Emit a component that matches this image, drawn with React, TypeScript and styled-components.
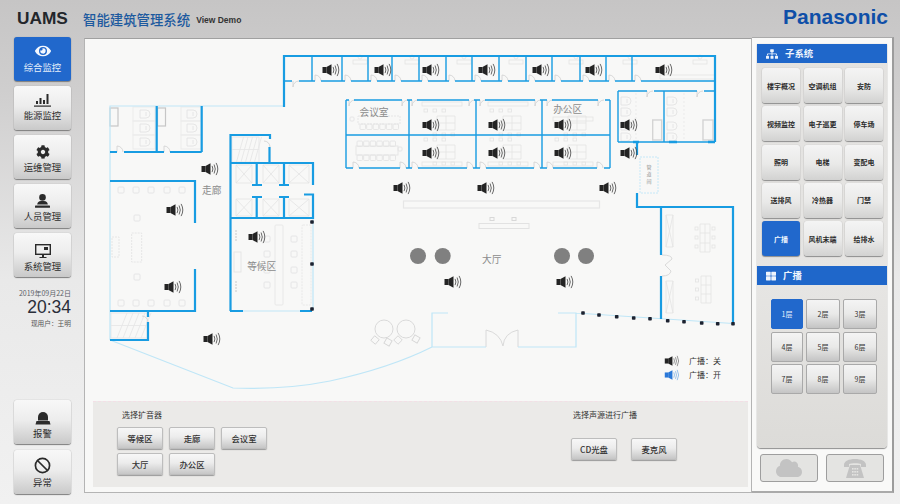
import React from 'react';
import styled, { createGlobalStyle } from 'styled-components';
import { FaEye, FaCog, FaSitemap, FaCloud, FaThLarge } from 'react-icons/fa';
import { Ban } from 'lucide-react';

const CJK = `"Noto Sans CJK SC", "Noto Sans", sans-serif`;
const Global = createGlobalStyle`
  html, body { margin: 0; padding: 0; }
  body { font-family: "Liberation Sans", ${CJK}; }
`;
const Root = styled.div`
  width: 900px; height: 504px; overflow: hidden; display: flex; flex-direction: column;
  background: linear-gradient(180deg, #c6c5c5 0, #cfcece 90px, #e9e9e9 280px, #f1f1f1 100%);
`;
const Header = styled.header`
  height: 37px; flex: none; display: flex; align-items: center; padding: 0 12px 0 17px; box-sizing: border-box;
`;
const Brand = styled.div`font: bold 17.3px "Liberation Sans", sans-serif; color: #23262b; width: 66px;`;
const Title = styled.div`font: 500 13.4px ${CJK}; color: #1d5a9f; line-height: 20px;`;
const Demo = styled.div`font: bold 8.5px "Liberation Sans", sans-serif; color: #333; margin: 3px 0 0 6px;`;
const Logo = styled.div`font: bold 21px "Liberation Sans", sans-serif; color: #0f4fa8; margin-left: auto; margin-top: -3px;`;
const Body = styled.div`flex: 1; display: flex; min-height: 0;`;
const Sidebar = styled.nav`
  width: 84px; flex: none; box-sizing: border-box; padding: 0 0 10px 14px; display: flex; flex-direction: column; gap: 5px;
`;
const SideButton = styled.button<{ $active?: boolean; $drop?: number }>`
  width: 57px; height: 44px; padding: ${p => p.$drop || 0}px 0 2px; flex: none; border: 0; border-radius: 3px;
  display: flex; flex-direction: column; align-items: center; justify-content: center; gap: 2px;
  font: 9.4px/13px ${CJK};
  color: ${p => (p.$active ? '#e4eefb' : '#2d2d2d')};
  background: ${p => (p.$active ? '#2168cc' : 'linear-gradient(180deg,#f8f8f8 0,#ededed 45%,#c9c9c9 100%)')};
  box-shadow: 0 1px 1px #7e7e7e, 0 0 1px #999;
  svg { display: block; }
`;
const Clock = styled.div`
  width: 57px; height: 50px; flex: none; display: flex; flex-direction: column; align-items: flex-end; color: #555; padding-top: 5px;
`;
const DateLine = styled.div`font: 7px/12px ${CJK}; white-space: nowrap; color: #5b6068;`;
const TimeLine = styled.div`font: 17.5px/16px "Liberation Sans", sans-serif; color: #2a2f3a;`;
const UserLine = styled.div`font: 6.7px/12px ${CJK}; margin-top: 2px; white-space: nowrap;`;
const SideBottom = styled.div`margin-top: auto; display: flex; flex-direction: column; gap: 6px;`;
const Main = styled.main`
  width: 668px; height: 455px; margin-top: 1px; flex: none; box-sizing: border-box;
  background: #f8f8f7; border: 1px solid #b4b4b4; border-top-color: #a0a0a0; display: flex; flex-direction: column;
`;
const Map = styled.svg`display: block; flex: none;`;
const ControlBar = styled.section`
  height: 86px; margin: 0 3px 5px 8px; flex: none; box-sizing: border-box; background: #ebeae8;
  border-top: 1px dashed #f3dfe6; display: flex;
`;
const SpeakerGroup = styled.div`width: 174px; margin-left: 24px; display: flex; flex-direction: column;`;
const SourceGroup = styled.div`margin-left: 280px; display: flex; flex-direction: column; width: 106px;`;
const GroupLabel = styled.div<{ $inset: number }>`
  font: 8px/12px ${CJK}; color: #333; margin: 7px 0 6px ${p => p.$inset}px; white-space: nowrap;
`;
const ButtonWrap = styled.div<{ $top?: number; $gap: number }>`
  display: flex; flex-wrap: wrap; gap: 4px ${p => p.$gap}px; margin-top: ${p => p.$top || 0}px;
`;
const AreaButton = styled.button`
  width: 46px; height: 22px; padding: 0; border: 1px solid #bdbdbd; border-radius: 2px;
  font: 500 8.4px/20px ${CJK}; color: #333;
  background: linear-gradient(180deg,#f7f7f7 0,#ececec 45%,#c6c6c6 100%);
  box-shadow: 0 1px 1px #999;
`;
const Right = styled.aside`
  width: 142px; height: 456px; flex: none; box-sizing: border-box; background: #f9f9f8;
  border-right: 2px solid #9c9c9c; border-bottom: 2px solid #aaa; border-top: 1px solid #aaa;
  padding: 6px 5px 0; display: flex; flex-direction: column;
`;
const Group = styled.div`
  height: 404px; flex: none; box-sizing: border-box; background: linear-gradient(180deg,#e3e2e0,#e6e5e3 60%,#dcdbd8);
  border-radius: 0 0 4px 4px; box-shadow: 0 1px 1px #8f8f8f, 0 0 1px #aaa; display: flex; flex-direction: column;
`;
const GroupHead = styled.div`
  height: 19px; flex: none; background: #1f67ca; color: #eef4fc; font: bold 9.4px/19px ${CJK};
  display: flex; align-items: center; gap: 7px; padding-left: 9px;
`;
const SubGrid = styled.div`
  display: grid; grid-template-columns: 38px 38px 38px; grid-auto-rows: 35px; gap: 3.3px 3.5px; padding: 5px 0 10px 5px;
`;
const SubButton = styled.button<{ $active?: boolean }>`
  padding: 0; border: 0; border-radius: 3px; font: bold 7px/12px ${CJK};
  color: ${p => (p.$active ? '#f4f8fe' : '#2b2b2b')};
  background: ${p => (p.$active ? '#2168cc' : 'linear-gradient(180deg,#f4f4f4,#e9e9e8 55%,#d2d2d1)')};
  box-shadow: 0 1px 1px #8d8d8d, 0 0 1px #aaa;
`;
const FloorGrid = styled.div`
  display: grid; grid-template-columns: 32px 34px 34px; grid-auto-rows: 30px; gap: 2.5px 3px; padding: 14px 0 0 14px;
`;
const FloorButton = styled.button<{ $active?: boolean }>`
  padding: 0; border-radius: 2px; font: 7px/12px ${CJK};
  border: 1px solid ${p => (p.$active ? '#2168cc' : '#a9a9a9')};
  color: ${p => (p.$active ? '#e9f1fc' : '#333')};
  background: ${p => (p.$active ? '#2168cc' : 'linear-gradient(180deg,#f4f4f4,#e9e9e8 50%,#c4c4c4)')};
`;
const FootRow = styled.div`display: flex; gap: 8px; margin: 6px 0 0 3px;`;
const FootButton = styled.button`
  width: 58px; height: 28px; padding: 0; border: 1px solid #9e9e9e; border-radius: 3px; background: #e4e4e2;
  display: flex; align-items: center; justify-content: center; color: #c3c3c3;
`;
const RoomLabel = styled.text<{ $size?: number }>`
  font-family: ${CJK}; font-size: ${p => p.$size || 9.7}px; fill: #8c8c8c; text-anchor: middle;
`;
const LegendLabel = styled.text`font-family: ${CJK}; font-size: 8px; fill: #333;`;

const BLUE = '#189ce2';
const LIGHT = '#bfe6f7';
const GREY = '#e3e3e3';

const hline = (y: number, x0: number, x1: number, gaps: number[][] = []) => {
  let d = '';
  let cur = x0;
  gaps.forEach(([a, b]) => { d += `M${cur} ${y}H${a}`; cur = b; });
  return d + `M${cur} ${y}H${x1}`;
};

const Speaker = ({ x, y, color = '#242424', arc = '#444', scale = 1 }: { x: number; y: number; color?: string; arc?: string; scale?: number }) => (
  <g transform={`translate(${x} ${y}) scale(${scale}) translate(-8.5 -6.5)`}>
    <rect x="0" y="3.5" width="4" height="6" fill={color} />
    <path d="M4 3.5 9 .8V12.2L4 9.5Z" fill={color} />
    <path d="M10.6 3.4Q12.2 6.5 10.6 9.6M12.6 2Q15 6.5 12.6 11M14.6 .4Q18 6.5 14.6 12.6" fill="none" stroke={arc} strokeWidth=".8" />
  </g>
);

const Xbox = ({ x, y, w, h }: { x: number; y: number; w: number; h: number }) => (
  <path d={`M${x} ${y}h${w}v${h}h${-w}zM${x} ${y}l${w} ${h}M${x + w} ${y}l${-w} ${h}`} fill="none" stroke={GREY} strokeWidth=".8" />
);
const Chair = ({ x, y, s = 6 }: { x: number; y: number; s?: number }) => (
  <rect x={x} y={y} width={s} height={s} rx="1" fill="none" stroke={GREY} strokeWidth=".9" />
);
const Toilet = ({ x, y }: { x: number; y: number }) => (
  <path d={`M${x} ${y}h6a4 4 0 0 1 0 8h-6zM${x + 6} ${y + 2}v4`} fill="none" stroke={GREY} strokeWidth=".9" />
);
const Stairs = ({ x, y, w, h }: { x: number; y: number; w: number; h: number }) => {
  const n = 6;
  let d = `M${x} ${y}h${w}v${h}h${-w}zM${x} ${y + h / 2}h${w}`;
  for (let i = 1; i < n; i++) d += `M${x + (w * i) / n} ${y + h}L${x + (w * (i + 2)) / n - 2} ${y}`;
  return <path d={d} fill="none" stroke="#e6e6e6" strokeWidth=".9" />;
};
const Door = ({ x, y, dir = -1 }: { x: number; y: number; dir?: number }) => (
  <path d={`M${x} ${y}v${dir * 6}a6 6 0 0 1 6 ${-dir * 6}`} fill="none" stroke="#d4d4d4" strokeWidth=".9" />
);
const Desk = ({ x, y }: { x: number; y: number }) => (
  <g fill="none" stroke={GREY} strokeWidth=".8">
    <circle cx={x} cy={y - 5} r="2" />
    <rect x={x - 7} y={y - 2} width="14" height="4" />
  </g>
);
const Office = ({ x, y, strip }: { x: number; y: number; strip: number }) => (
  <g fill="none" stroke={GREY} strokeWidth=".8">
    <rect x={x - 13} y={strip} width="40" height="4" />
    <path d={`M${x + 2} ${y}h18v14h-18zM${x + 11} ${y}v14M${x + 2} ${y + 7}h18`} />
    {[0, 9, 18].map(i => <rect key={i} x={x + i - 11} y={y - 7} width="3.5" height="3" />)}
    {[0, 9, 18].map(i => <rect key={i} x={x + i - 2} y={y + 17} width="3.5" height="3" />)}
  </g>
);

const topDividers = [312, 342, 368, 392, 419, 446, 472, 499, 526, 552, 580, 606, 632];
const meetTop = [[349, 354], [402, 407], [412, 417], [469, 474], [480, 485], [535, 540], [547, 552], [598, 605]];
const meetBottom = [[353, 359], [400, 406], [412, 418], [467, 473], [480, 486], [534, 540], [547, 553], [597, 604]];
const thick = [
  'M284 107V56H715V142',
  'M156.7 106V152M201.7 106V152',
  hline(152, 110, 201.7, [[117, 124], [164, 170]]),
  'M110 181H195V223M195 269V311H110M148 311V317M148 322V340H110',
  'M269.5 147V163M230.5 311V135H270V139M230 163H313V185M256.7 163V184M284 163V184M252 185H262M279 185H289',
  'M252 197H262M279 197H289M256.7 197V218M284 197V218M304 194.5H313V218H230M230 311H243M300 311H312',
  'M637 142V155M637 193V207H733V323M661 207V255M661 276V319',
];
const mediumWalls = [
  hline(81, 284, 715, [[292, 299], ...topDividers.map(d => [d + 3, d + 9])]),
  ...topDividers.map(d => `M${d} 56V81`),
  hline(100, 346, 610, meetTop), hline(168, 346, 610, meetBottom), 'M346 100V168M409 100V168M476 100V168M542 100V168M610 100V168M346 135H610',
  'M618 142V91', hline(91, 618, 715, [[647, 654], [697, 704]]), 'M664 91V142M618 142H715',
];
const lightPath = 'M284 106H110V340M110 340 233 388Q285 390 330 381 390 368 432 347V313H448M432 347H486M518 347H576V313H558M576 313 733 323.5M243 311H300M313 218V310';
const dots = [[583, 313], [599, 315], [616.7, 316.7], [633.7, 318], [650, 318.7], [667.7, 320.7], [684, 321.7], [701.7, 323], [717.7, 323.7], [733, 323.7], [312, 222], [312, 264], [312, 309]];
const speakers = [
  [331, 70], [383, 70], [431, 70], [487, 70], [541, 70], [594, 70], [664, 70],
  [431, 125], [497, 125], [563, 125], [629, 125], [431, 153], [497, 153], [563, 153], [629, 153],
  [402, 188], [486, 188], [608, 188], [210, 169], [175, 210], [173, 287], [257, 237], [212, 339], [453, 282], [565, 282],
];
const seatsX = [118, 133, 148, 164, 179];

const FloorPlan = () => (
  <Map width="666" height="362" viewBox="85 39 666 362">
    <rect x="110" y="108" width="8" height="18" fill="none" stroke="#c6c6c6" strokeWidth="1.2" />
    <rect x="157.5" y="108" width="8" height="18" fill="none" stroke="#c6c6c6" strokeWidth="1.2" />
    <rect x="652.7" y="120" width="9" height="20" fill="none" stroke="#d4d4d4" strokeWidth="1.4" />
    <rect x="703" y="120" width="10" height="20" fill="none" stroke="#d4d4d4" strokeWidth="1.4" />
    {[107, 121, 135].map(y => (
      <g key={y}>
        <rect x="133" y={y} width="22" height="14" fill="none" stroke="#ebebeb" />
        <rect x="181" y={y} width="20" height="14" fill="none" stroke="#ebebeb" />
        <Toilet x={140} y={y + 3} />
        <Toilet x={187} y={y + 3} />
      </g>
    ))}
    {[97, 108, 122, 133].map(y => (
      <g key={y}>
        <Toilet x={621} y={y} />
        <Toilet x={667} y={y} />
      </g>
    ))}
    <path d="M636 93V140M684 93V140" stroke="#ebebeb" strokeDasharray="2 2" />
    {seatsX.map(x => <g key={x}><Chair x={x} y={187} /><Chair x={x} y={300} /></g>)}
    <rect x="131.7" y="233" width="10" height="29" fill="none" stroke="#e6e6e6" strokeDasharray="2 1" />
    <Chair x={134} y={215} /><Chair x={134} y={274} />
    <rect x="112" y="237" width="7" height="20" fill="none" stroke="#e6e6e6" strokeDasharray="2 1" />
    <Stairs x={232} y={137} w={27} h={25} />
    <Stairs x={111} y={313} w={36} h={25} />
    {[236, 263, 289].map(x => <g key={x}><Xbox x={x} y={165} w={x === 289 ? 20 : 16} h={18} /><Xbox x={x} y={199} w={x === 289 ? 20 : 16} h={17} /></g>)}
    <rect x="275" y="225" width="8" height="80" rx="1" fill="none" stroke="#e8e8e8" />
    <rect x="302" y="225" width="9" height="80" rx="1" fill="none" stroke="#e8e8e8" strokeDasharray="2 1" />
    {[236, 251, 267, 282].map(y => <g key={y}><Chair x={264} y={y} /><Chair x={291} y={y} /></g>)}
    <rect x="234" y="252" width="7" height="20" fill="none" stroke="#e6e6e6" />
    <path d="M236 230v12M236 281v12" stroke="#e0e0e0" strokeWidth="2" strokeDasharray="2 1" />
    {[0, 1, 2, 3, 4, 5].map(i => <Desk key={i} x={360 + i * (i > 3 ? 54 : 52)} y={62} />)}
    <Desk x={700} y={62} />
    <path d="M660 75h55v4h-55z" fill="none" stroke={GREY} strokeWidth=".8" />
    <rect x="358" y="116" width="42" height="8" fill="none" stroke="#e6e6e6" strokeDasharray="2 1" />
    <rect x="356" y="146" width="42" height="9" fill="none" stroke="#e6e6e6" />
    {[0, 1, 2, 3, 4, 5].map(i => (
      <g key={i}>
        <Chair x={360 + i * 6.6} y={124} s={5.5} />
        <Chair x={357 + i * 6.6} y={141} s={5.5} />
        <Chair x={357 + i * 6.6} y={155} s={5.5} />
      </g>
    ))}
    <Chair x={350} y={117} s={4} /><Chair x={398} y={147} s={4} />
    <Office x={435} y={116} strip={102} />
    <Office x={501} y={116} strip={102} />
    <Office x={566} y={116} strip={117} />
    <Office x={435} y={145} strip={162} />
    <Office x={501} y={145} strip={162} />
    <Office x={566} y={145} strip={162} />
    <rect x="640" y="157" width="18" height="36" fill="none" stroke={LIGHT} strokeWidth=".9" strokeDasharray="2 1" />
    <RoomLabel x={649} y={169} $size={5}>管</RoomLabel>
    <RoomLabel x={649} y={176} $size={5}>道</RoomLabel>
    <RoomLabel x={649} y={183} $size={5}>间</RoomLabel>
    <rect x="403.5" y="201" width="196" height="7" fill="none" stroke="#e6e6e6" strokeWidth="1.2" />
    <rect x="479" y="223.5" width="50" height="5" fill="none" stroke="#e2e2e2" />
    <rect x="490" y="217.5" width="4" height="3" fill="none" stroke="#d8d8d8" /><rect x="512" y="217.5" width="4" height="3" fill="none" stroke="#d8d8d8" />
    <g fill="none" stroke="#d6d6d6" strokeWidth=".9">
      <circle cx="384" cy="329" r="9" /><circle cx="406" cy="329" r="9" />
      <rect x="372" y="337" width="6" height="6" transform="rotate(40 375 340)" />
      <rect x="385" y="339" width="6" height="6" transform="rotate(30 388 342)" />
      <rect x="395" y="337" width="6" height="6" transform="rotate(45 398 340)" />
      <rect x="413" y="336" width="6" height="6" transform="rotate(30 416 339)" />
      <path d="M486 347V330Q500 333 503 346M518 347V330Q504 333 503 346" />
      <path d="M662 255q10 0 10 4l-7 6 6 6q-1 5-9 5" />
    </g>
    <Xbox x={666} y={215} w={7} h={32} />
    <Xbox x={666} y={281} w={7} h={32} />
    <g fill="none" stroke={GREY} strokeWidth=".8">
      <path d="M700 224h10v28h-10zM700 233h10M700 243h10M705 224v28M701 276h10v27h-10zM701 285h10M701 294h10M706 276v27" />
      {[227, 236, 245].map(y => <g key={y}><rect x="695" y={y} width="3" height="3" /><rect x="712" y={y} width="3" height="3" /></g>)}
      {[279, 288, 297].map(y => <rect key={y} x="695.5" y={y} width="3" height="3" />)}
    </g>
    {topDividers.map(d => <Door key={d} x={d + 3} y={81} />)}
    <Door x={293} y={81} dir={1} />
    <Door x={117} y={152} />
    <Door x={164} y={152} />
    <path d="M270 147a6 6 0 0 0-6-6M148 322a6 6 0 0 0-6-6" fill="none" stroke="#d4d4d4" strokeWidth=".9" />
    {meetTop.map(([a]) => <Door key={a} x={a} y={100} dir={1} />)}
    {meetBottom.map(([a]) => <Door key={a} x={a} y={168} />)}
    <Door x={647} y={91} dir={1} /><Door x={697} y={91} dir={1} />
    <path d={lightPath} fill="none" stroke={LIGHT} strokeWidth="1.2" />
    <path d={thick.join('')} fill="none" stroke={BLUE} strokeWidth="2.2" />
    <path d={mediumWalls.join('')} fill="none" stroke={BLUE} strokeWidth="1.4" />
    <path d="M633 142h6M669 142h8M708 142h7" stroke={BLUE} strokeWidth="2.4" />
    {dots.map(([x, y]) => <rect key={`${x}-${y}`} x={x - 1.8} y={y - 1.8} width="3.6" height="3.6" rx=".8" fill="#1c2230" />)}
    {[418, 442.7, 562, 586].map(cx => <circle key={cx} cx={cx} cy="256" r="8" fill="#808080" />)}
    {speakers.map(([x, y]) => <Speaker key={`${x}-${y}`} x={x} y={y} />)}
    <RoomLabel x={211.7} y={194}>走廊</RoomLabel>
    <RoomLabel x={261.7} y={270}>等候区</RoomLabel>
    <RoomLabel x={491.7} y={263}>大厅</RoomLabel>
    <RoomLabel x={374} y={116}>会议室</RoomLabel>
    <RoomLabel x={567.7} y={113}>办公区</RoomLabel>
    <Speaker x={672} y={361} scale={.85} arc="#666" />
    <Speaker x={672} y={375} scale={.85} color="#2a78d8" arc="#6fa6e2" />
    <LegendLabel x={689} y={364}>广播：关</LegendLabel>
    <LegendLabel x={689} y={378}>广播：开</LegendLabel>
  </Map>
);

const subsystems = ['楼宇概况', '空调机组', '安防', '视频监控', '电子巡更', '停车场', '照明', '电梯', '变配电', '送排风', '冷热器', '门禁', '广播', '风机末端', '给排水'];
const floors = ['1层', '2层', '3层', '4层', '5层', '6层', '7层', '8层', '9层'];

const BarsIcon = () => (
  <svg width="17" height="14" viewBox="0 0 17 14" fill="#2a2a2a">
    <rect x="2" y="8" width="2" height="3" /><rect x="5.5" y="5" width="2" height="6" /><rect x="9" y="7" width="2" height="4" /><rect x="12.5" y="1" width="2" height="10" />
    <rect x="0" y="12.5" width="17" height="1.2" />
  </svg>
);
const PersonIcon = () => (
  <svg width="15" height="14" viewBox="0 0 15 14" fill="#2a2a2a">
    <circle cx="7.5" cy="3.4" r="3.3" />
    <path d="M2.2 10.6Q2.5 7 6 7h3q3.500 0 3.800 3.600z" />
    <rect x="0" y="11.6" width="15" height="2.2" rx=".6" />
  </svg>
);
const MonitorIcon = () => (
  <svg width="16" height="14" viewBox="0 0 16 14">
    <rect x=".7" y=".7" width="14.6" height="9.6" fill="none" stroke="#2a2a2a" strokeWidth="1.4" />
    <rect x="9" y="3" width="4" height="3" fill="#2a2a2a" />
    <path d="M7 10.5h2V13h2.5v1h-7v-1H7z" fill="#2a2a2a" />
  </svg>
);
const BellIcon = () => (
  <svg width="16" height="15" viewBox="0 0 16 15" fill="#2b2b2b">
    <path d="M3 10.5V7a5 5 0 0 1 10 0v3.500z" /><path d="M1.5 11h13l1 3.500H.5z" />
  </svg>
);
const PhoneIcon = () => (
  <svg width="24" height="21" viewBox="0 0 24 21" fill="#c3c3c3">
    <path d="M1 7C1 3 6 1 12 1s11 2 11 6v2h-5V6c-1.500-1-10-1-12 0v3H1z" />
    <path d="M7 7h10l1 3 3 10H3l3-10z" />
    <g fill="#e4e4e2">
      {[10, 13, 16].map(y => [9, 11.3, 13.6].map(x => <rect key={`${x}-${y}`} x={x} y={y} width="1.6" height="1.6" />))}
    </g>
  </svg>
);

export default function App() {
  return (
    <Root>
      <Global />
      <Header>
        <Brand>UAMS</Brand>
        <Title>智能建筑管理系统</Title>
        <Demo>View Demo</Demo>
        <Logo>Panasonic</Logo>
      </Header>
      <Body>
        <Sidebar>
          <SideButton $active><FaEye size={16} color="#f4f8fe" />综合监控</SideButton>
          <SideButton><BarsIcon />能源监控</SideButton>
          <SideButton $drop={6}><FaCog size={14} color="#2a2a2a" />运维管理</SideButton>
          <SideButton $drop={6}><PersonIcon />人员管理</SideButton>
          <SideButton $drop={8}><MonitorIcon />系统管理</SideButton>
          <Clock>
            <DateLine>2019年09月22日</DateLine>
            <TimeLine>20:34</TimeLine>
            <UserLine>现用户：王明</UserLine>
          </Clock>
          <SideBottom>
            <SideButton $drop={8}><BellIcon />报警</SideButton>
            <SideButton $drop={4}><Ban size={17} color="#2a2a2a" strokeWidth={2.4} />异常</SideButton>
          </SideBottom>
        </Sidebar>
        <Main>
          <FloorPlan />
          <ControlBar>
            <SpeakerGroup>
              <GroupLabel $inset={5}>选择扩音器</GroupLabel>
              <ButtonWrap $gap={6}>
                {['等候区', '走廊', '会议室', '大厅', '办公区'].map(t => <AreaButton key={t}>{t}</AreaButton>)}
              </ButtonWrap>
            </SpeakerGroup>
            <SourceGroup>
              <GroupLabel $inset={2}>选择声源进行广播</GroupLabel>
              <ButtonWrap $top={11} $gap={14}>
                <AreaButton>CD光盘</AreaButton>
                <AreaButton>麦克风</AreaButton>
              </ButtonWrap>
            </SourceGroup>
          </ControlBar>
        </Main>
        <Right>
          <Group>
            <GroupHead><FaSitemap size={12} />子系统</GroupHead>
            <SubGrid>
              {subsystems.map(t => <SubButton key={t} $active={t === '广播'}>{t}</SubButton>)}
            </SubGrid>
            <GroupHead><FaThLarge size={10} />广播</GroupHead>
            <FloorGrid>
              {floors.map((t, i) => <FloorButton key={t} $active={i === 0}>{t}</FloorButton>)}
            </FloorGrid>
          </Group>
          <FootRow>
            <FootButton><FaCloud size={26} /></FootButton>
            <FootButton><PhoneIcon /></FootButton>
          </FootRow>
        </Right>
      </Body>
    </Root>
  );
}
